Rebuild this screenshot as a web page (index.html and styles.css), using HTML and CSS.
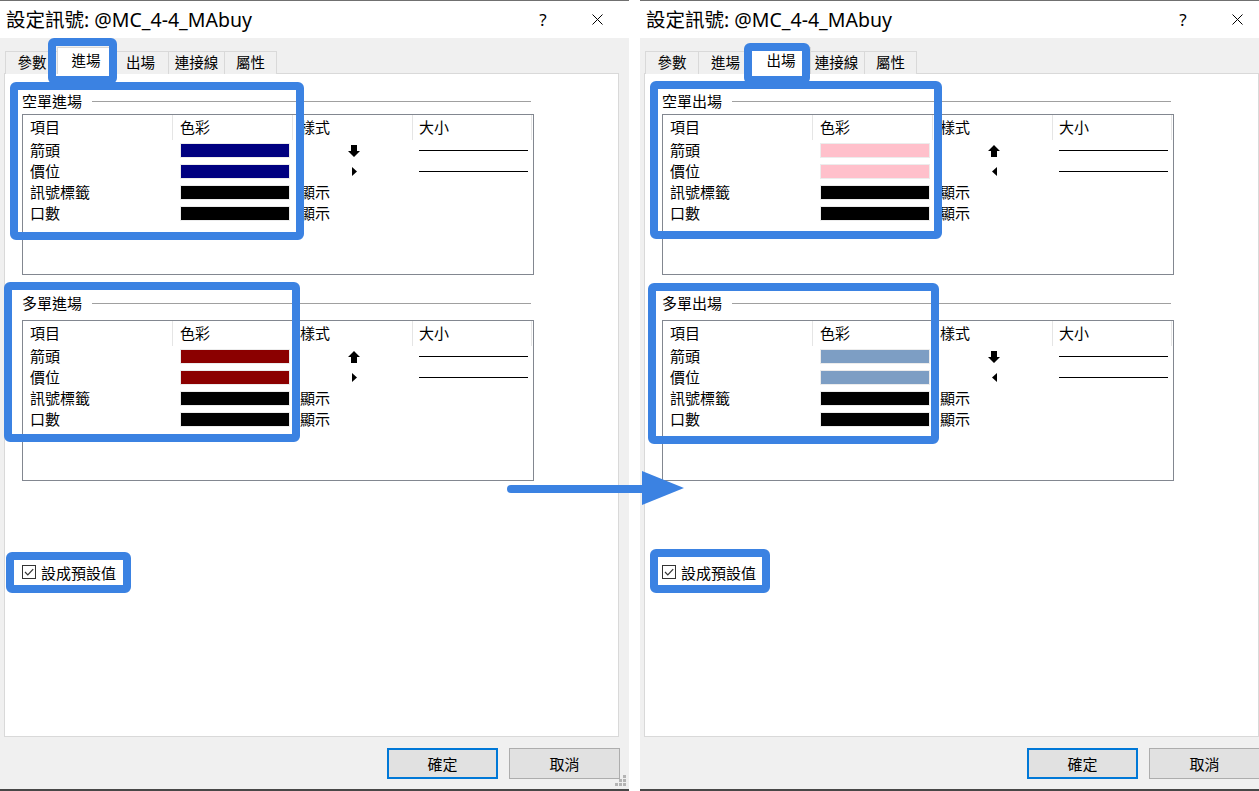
FILE: index.html
```html
<!DOCTYPE html>
<html lang="zh-Hant">
<head>
<meta charset="utf-8">
<title>設定訊號</title>
<link rel="stylesheet" href="styles.css">
</head>
<body>
<div class="stage">
  <section class="dlg">
    <header class="titlebar">
      <span class="title">設定訊號: @MC_4-4_MAbuy</span>
      <span class="help">?</span>
      <span class="close"><svg width="11" height="11" viewBox="0 0 11 11"><path d="M0.5 0.5L10.5 10.5M10.5 0.5L0.5 10.5" stroke="#000" stroke-width="1" fill="none"/></svg></span>
    </header>
    <div class="dlg-body">
      <div class="tabs">
        <div class="tab t1">參數</div>
        <div class="tab t2 active">進場</div>
        <div class="tab t3">出場</div>
        <div class="tab t4">連接線</div>
        <div class="tab t5">屬性</div>
      </div>
      <div class="panel">
        <div class="group first">
          <div class="legend"><span>空單進場</span><i class="rule"></i></div>
          <div class="list">
            <div class="row head"><div class="c c1">項目</div><div class="c c2">色彩</div><div class="c c3">樣式</div><div class="c c4">大小</div></div>
            <div class="row"><div class="c c1">箭頭</div><div class="c c2"><span class="sw navy"></span></div><div class="c c3 icon"><svg width="12" height="12" viewBox="0 0 12 12"><path d="M3 0H9V6H12L6 12L0 6H3Z" fill="#000"/></svg></div><div class="c c4"><i class="sz"></i></div></div>
            <div class="row"><div class="c c1">價位</div><div class="c c2"><span class="sw navy"></span></div><div class="c c3 icon"><svg width="5" height="9" viewBox="0 0 5 9"><path d="M0 0L5 4.5L0 9Z" fill="#000"/></svg></div><div class="c c4"><i class="sz"></i></div></div>
            <div class="row"><div class="c c1">訊號標籤</div><div class="c c2"><span class="sw black"></span></div><div class="c c3">顯示</div><div class="c c4"></div></div>
            <div class="row"><div class="c c1">口數</div><div class="c c2"><span class="sw black"></span></div><div class="c c3">顯示</div><div class="c c4"></div></div>
          </div>
        </div>
        <div class="group second">
          <div class="legend"><span>多單進場</span><i class="rule"></i></div>
          <div class="list">
            <div class="row head"><div class="c c1">項目</div><div class="c c2">色彩</div><div class="c c3">樣式</div><div class="c c4">大小</div></div>
            <div class="row"><div class="c c1">箭頭</div><div class="c c2"><span class="sw maroon"></span></div><div class="c c3 icon"><svg width="12" height="12" viewBox="0 0 12 12"><path d="M6 0L12 6H9V12H3V6H0Z" fill="#000"/></svg></div><div class="c c4"><i class="sz"></i></div></div>
            <div class="row"><div class="c c1">價位</div><div class="c c2"><span class="sw maroon"></span></div><div class="c c3 icon"><svg width="5" height="9" viewBox="0 0 5 9"><path d="M0 0L5 4.5L0 9Z" fill="#000"/></svg></div><div class="c c4"><i class="sz"></i></div></div>
            <div class="row"><div class="c c1">訊號標籤</div><div class="c c2"><span class="sw black"></span></div><div class="c c3">顯示</div><div class="c c4"></div></div>
            <div class="row"><div class="c c1">口數</div><div class="c c2"><span class="sw black"></span></div><div class="c c3">顯示</div><div class="c c4"></div></div>
          </div>
        </div>
        <div class="chk"><span class="box"><svg width="12" height="12" viewBox="0 0 12 12"><polyline points="2,6 4.8,8.8 10.2,3.2" stroke="#333" stroke-width="1.2" fill="none"/></svg></span><span>設成預設值</span></div>
      </div>
      <div class="btns"><button class="btn default">確定</button><button class="btn">取消</button></div>
    </div>
    <span class="grip"><svg width="12" height="12" viewBox="0 0 12 12"><g fill="#b4b4b4"><rect x="8" y="0" width="3" height="3"/><rect x="4" y="4" width="3" height="3"/><rect x="8" y="4" width="3" height="3"/><rect x="0" y="8" width="3" height="3"/><rect x="4" y="8" width="3" height="3"/><rect x="8" y="8" width="3" height="3"/></g></svg></span>
  </section>

  <section class="dlg">
    <header class="titlebar">
      <span class="title">設定訊號: @MC_4-4_MAbuy</span>
      <span class="help">?</span>
      <span class="close"><svg width="11" height="11" viewBox="0 0 11 11"><path d="M0.5 0.5L10.5 10.5M10.5 0.5L0.5 10.5" stroke="#000" stroke-width="1" fill="none"/></svg></span>
    </header>
    <div class="dlg-body">
      <div class="tabs">
        <div class="tab t1">參數</div>
        <div class="tab t2">進場</div>
        <div class="tab t3 active">出場</div>
        <div class="tab t4">連接線</div>
        <div class="tab t5">屬性</div>
      </div>
      <div class="panel">
        <div class="group first">
          <div class="legend"><span>空單出場</span><i class="rule"></i></div>
          <div class="list">
            <div class="row head"><div class="c c1">項目</div><div class="c c2">色彩</div><div class="c c3">樣式</div><div class="c c4">大小</div></div>
            <div class="row"><div class="c c1">箭頭</div><div class="c c2"><span class="sw pink"></span></div><div class="c c3 icon"><svg width="12" height="12" viewBox="0 0 12 12"><path d="M6 0L12 6H9V12H3V6H0Z" fill="#000"/></svg></div><div class="c c4"><i class="sz"></i></div></div>
            <div class="row"><div class="c c1">價位</div><div class="c c2"><span class="sw pink"></span></div><div class="c c3 icon"><svg width="5" height="9" viewBox="0 0 5 9"><path d="M5 0L0 4.5L5 9Z" fill="#000"/></svg></div><div class="c c4"><i class="sz"></i></div></div>
            <div class="row"><div class="c c1">訊號標籤</div><div class="c c2"><span class="sw black"></span></div><div class="c c3">顯示</div><div class="c c4"></div></div>
            <div class="row"><div class="c c1">口數</div><div class="c c2"><span class="sw black"></span></div><div class="c c3">顯示</div><div class="c c4"></div></div>
          </div>
        </div>
        <div class="group second">
          <div class="legend"><span>多單出場</span><i class="rule"></i></div>
          <div class="list">
            <div class="row head"><div class="c c1">項目</div><div class="c c2">色彩</div><div class="c c3">樣式</div><div class="c c4">大小</div></div>
            <div class="row"><div class="c c1">箭頭</div><div class="c c2"><span class="sw steel"></span></div><div class="c c3 icon"><svg width="12" height="12" viewBox="0 0 12 12"><path d="M3 0H9V6H12L6 12L0 6H3Z" fill="#000"/></svg></div><div class="c c4"><i class="sz"></i></div></div>
            <div class="row"><div class="c c1">價位</div><div class="c c2"><span class="sw steel"></span></div><div class="c c3 icon"><svg width="5" height="9" viewBox="0 0 5 9"><path d="M5 0L0 4.5L5 9Z" fill="#000"/></svg></div><div class="c c4"><i class="sz"></i></div></div>
            <div class="row"><div class="c c1">訊號標籤</div><div class="c c2"><span class="sw black"></span></div><div class="c c3">顯示</div><div class="c c4"></div></div>
            <div class="row"><div class="c c1">口數</div><div class="c c2"><span class="sw black"></span></div><div class="c c3">顯示</div><div class="c c4"></div></div>
          </div>
        </div>
        <div class="chk"><span class="box"><svg width="12" height="12" viewBox="0 0 12 12"><polyline points="2,6 4.8,8.8 10.2,3.2" stroke="#333" stroke-width="1.2" fill="none"/></svg></span><span>設成預設值</span></div>
      </div>
      <div class="btns"><button class="btn default">確定</button><button class="btn">取消</button></div>
    </div>
  </section>
</div>

<div class="notes">
  <div class="hl n-ltab"></div>
  <div class="hl n-lg1"></div>
  <div class="hl n-lg2"></div>
  <div class="hl n-lchk"></div>
  <div class="hl n-rtab"></div>
  <div class="hl n-rg1"></div>
  <div class="hl n-rg2"></div>
  <div class="hl n-rchk"></div>
  <svg class="arrow" width="200" height="50" viewBox="500 465 200 50"><line x1="511" y1="489" x2="648" y2="489" stroke="#3b82e2" stroke-width="8" stroke-linecap="round"/><polygon points="642,471 684,488 642,505" fill="#3b82e2"/></svg>
</div>
</body>
</html>
```

FILE: styles.css
```css
* { box-sizing: border-box; margin: 0; padding: 0; }
html, body { width: 1259px; height: 791px; overflow: hidden; background: #fff; }
body {
  font-family: "Noto Sans", "Noto Sans CJK TC", sans-serif;
  font-size: 15px;
  color: #000;
  position: relative;
}

.stage { display: flex; gap: 11px; height: 791px; }

.dlg {
  flex: 0 0 629px;
  width: 629px;
  height: 791px;
  display: flex;
  flex-direction: column;
  position: relative;
  background: #f0f0f0;
  border-bottom: 2px solid #474747;
}

.titlebar {
  height: 38px;
  flex: 0 0 38px;
  background: #fff;
  border-top: 1px solid #707070;
  display: flex;
  align-items: center;
  padding-left: 6px;
}
.title { flex: 1; font-size: 19.5px; line-height: 1; white-space: nowrap; }
.help { width: 46px; text-align: center; font-size: 17px; line-height: 1; }
.close { width: 63px; display: flex; justify-content: center; align-items: center; }
.close svg { display: block; }

.dlg-body { flex: 1; display: flex; flex-direction: column; }

.tabs {
  display: flex;
  align-items: flex-end;
  padding: 9px 0 0 5px;
  margin-bottom: -1px;
  position: relative;
  z-index: 1;
}
.tab {
  height: 23px;
  border-top: 1px solid #d9d9d9;
  border-right: 1px solid #d9d9d9;
  background: #f0f0f0;
  font-size: 14.5px;
  line-height: 21px;
  text-align: center;
  white-space: nowrap;
}
.t1 { width: 54px; border-left: 1px solid #d9d9d9; }
.t2 { width: 54px; }
.t3 { width: 56px; }
.t4 { width: 56px; }
.t5 { width: 52px; }
.tab.active {
  height: 27px;
  margin: 0 -2px;
  background: #fff;
  border-left: 1px solid #d9d9d9;
  line-height: 25px;
  position: relative;
  z-index: 2;
}
.t2.active { width: 58px; }
.t3.active { width: 60px; }

.panel {
  margin-left: 4px;
  width: 615px;
  height: 664px;
  flex: 0 0 664px;
  background: #fff;
  border: 1px solid #d9d9d9;
  padding: 18px 0 0 17px;
}

.legend {
  display: flex;
  align-items: center;
  gap: 10px;
  width: 509px;
  height: 18px;
  line-height: 18px;
}
.legend .rule { flex: 1; height: 1px; background: #a0a0a0; }

.list {
  width: 512px;
  height: 161px;
  border: 1px solid #828790;
  background: #fff;
}
.first .list { margin-top: 4px; }
.second { margin-top: 19px; }
.second .list { margin-top: 8px; }

.row {
  display: grid;
  grid-template-columns: 150px 120px 120px 119px;
  height: 21px;
  line-height: 21px;
}
.row.head { height: 25px; line-height: 25px; }
.head .c { border-right: 1px solid #e5e5e5; }
.c { padding-left: 7px; white-space: nowrap; display: flex; align-items: center; }
.c4 { padding-left: 6px; }
.c3.icon { justify-content: center; padding-left: 2px; }
.c3.icon svg { display: block; }

.sw { display: block; width: 110px; height: 15px; border: 1px solid #ececec; }
.navy { background: #000080; }
.maroon { background: #8b0000; }
.black { background: #000; }
.pink { background: #ffc0cb; }
.steel { background: #7d9ec4; }

.sz { display: block; width: 109px; height: 1px; background: #000; }

.chk {
  margin-top: 81px;
  height: 20px;
  display: flex;
  align-items: center;
  gap: 5px;
}
.chk .box {
  width: 14px;
  height: 14px;
  border: 1px solid #333;
  background: #fff;
  display: flex;
  align-items: center;
  justify-content: center;
}
.chk .box svg { display: block; }

.btns {
  display: flex;
  justify-content: flex-end;
  gap: 11px;
  padding: 11px 9px 0 0;
}
.btn {
  width: 111px;
  height: 31px;
  background: #e1e1e1;
  border: 1px solid #adadad;
  font-family: inherit;
  font-size: 15px;
  color: #000;
}
.btn.default { border: 2px solid #0078d7; }

.grip { position: absolute; right: 2px; bottom: 2px; width: 12px; height: 12px; }
.grip svg { display: block; }

.notes { position: absolute; left: 0; top: 0; width: 1259px; height: 791px; pointer-events: none; z-index: 10; }
.hl { position: absolute; border: 8px solid #3b82e2; border-radius: 6px; }
.n-ltab { left: 48px; top: 38px; width: 69px; height: 46px; }
.n-lg1 { left: 10px; top: 82px; width: 294px; height: 158px; }
.n-lg2 { left: 4px; top: 282px; width: 296px; height: 160px; }
.n-lchk { left: 6px; top: 552px; width: 125px; height: 41px; }
.n-rtab { left: 744px; top: 43px; width: 66px; height: 41px; }
.n-rg1 { left: 650px; top: 81px; width: 292px; height: 158px; }
.n-rg2 { left: 648px; top: 283px; width: 291px; height: 161px; }
.n-rchk { left: 650px; top: 549px; width: 120px; height: 44px; }
.arrow { position: absolute; left: 500px; top: 465px; }
```
